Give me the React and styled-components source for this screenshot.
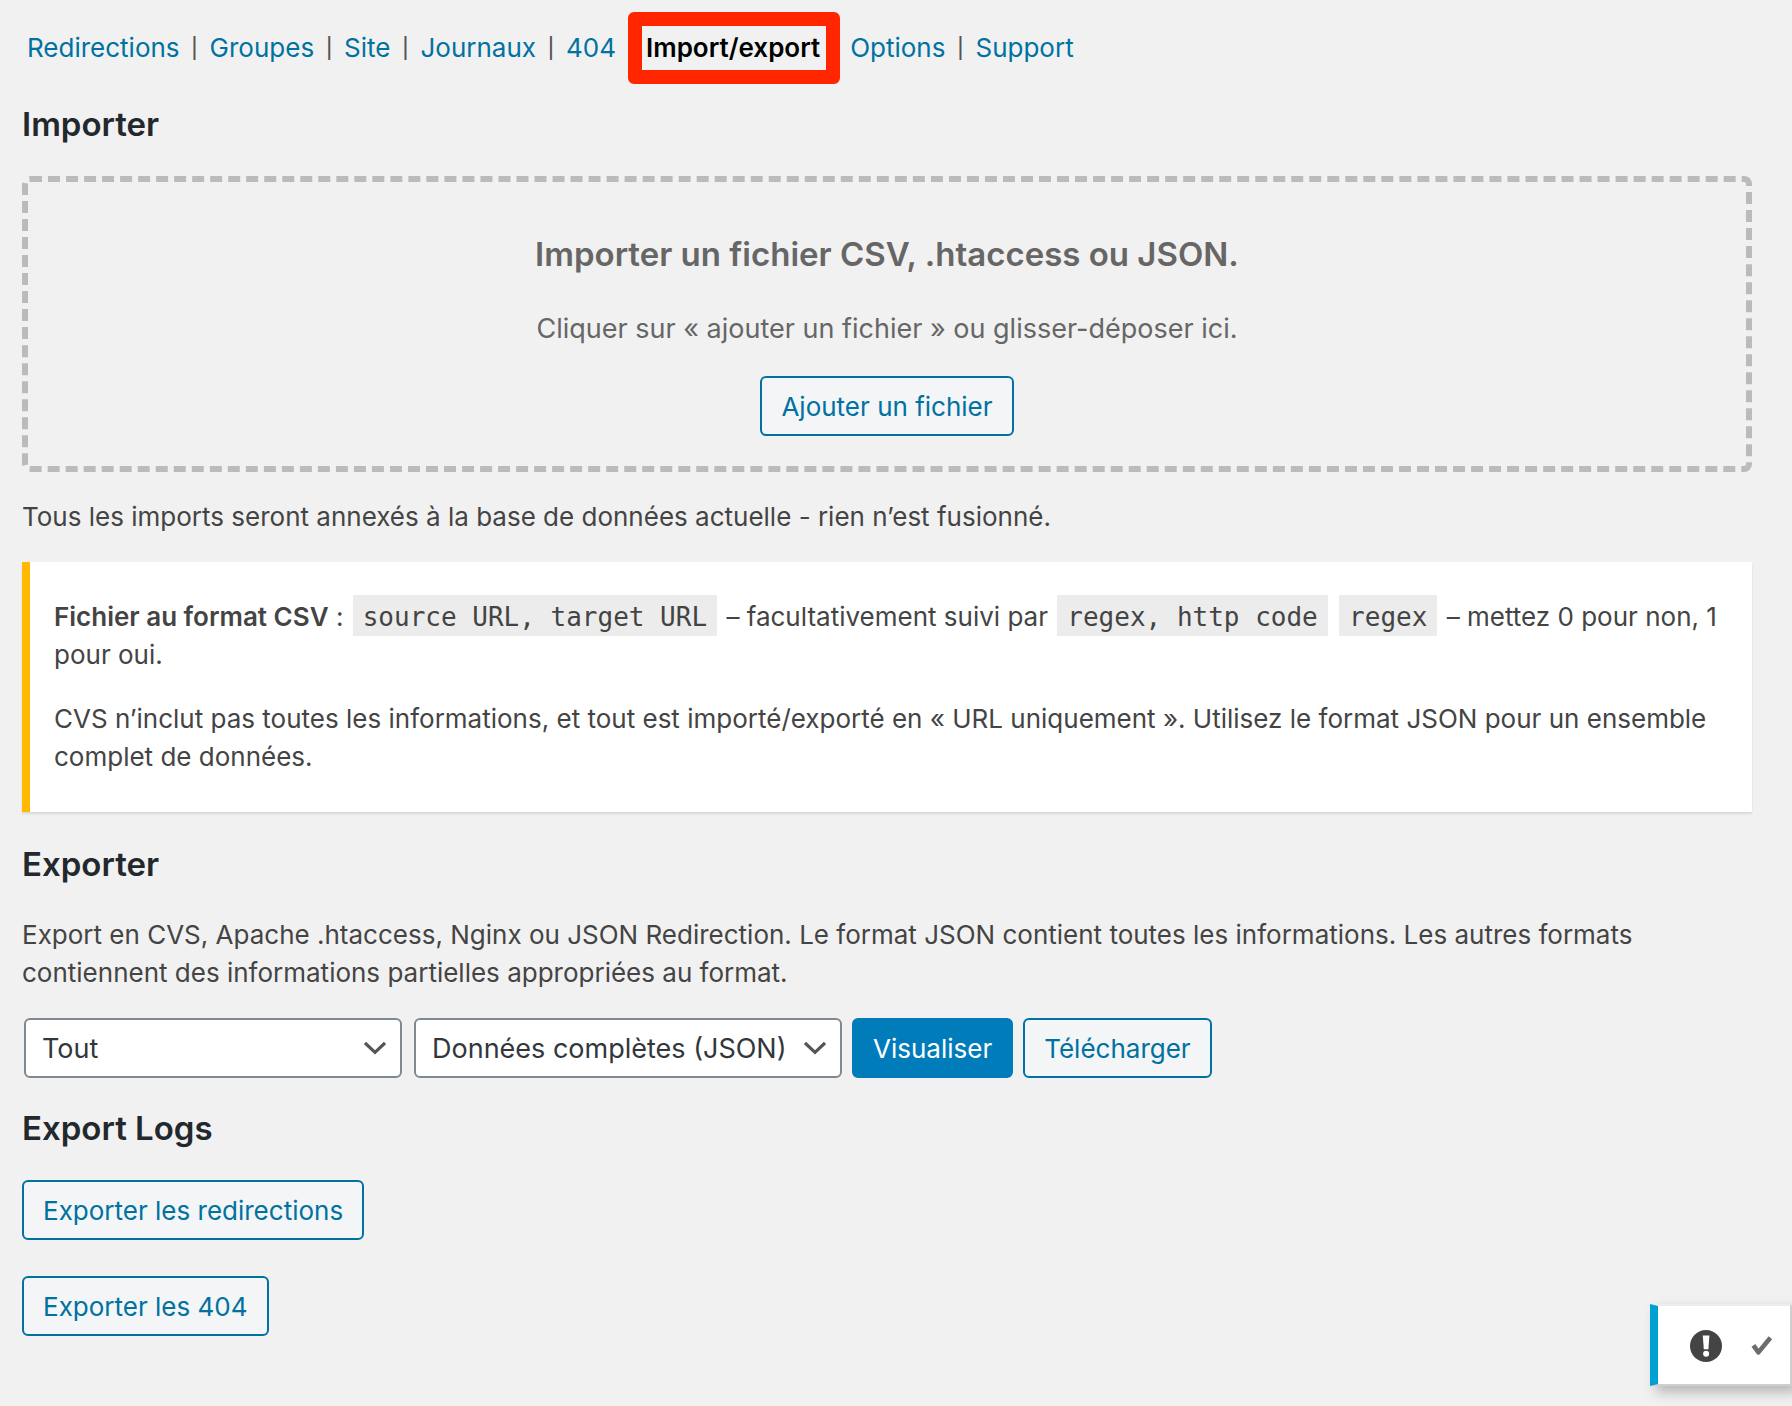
import React from "react";
import styled, { createGlobalStyle } from "styled-components";

const GlobalStyle = createGlobalStyle`
  *, *::before, *::after {
    box-sizing: border-box;
  }
  body {
    margin: 0;
    background: #f1f1f1;
    color: #444;
    font-family: Inter, "Liberation Sans", sans-serif;
    font-size: 26px;
    line-height: 38px;
  }
`;

const Page = styled.main`
  padding: 28px 40px 70px 22px;
`;

const Nav = styled.ul`
  display: flex;
  flex-wrap: wrap;
  margin: 0;
  padding: 0 0 0 5px;
  list-style: none;
  line-height: 40px;
`;

const NavItem = styled.li`
  display: flex;
  white-space: nowrap;

  & + &::before {
    content: "|";
    width: 30px;
    color: #555;
    font-size: 20px;
    font-weight: 500;
    text-align: center;
  }
`;

const NavLink = styled.a`
  position: relative;
  color: ${(p) => (p.$current ? "#000" : "#0071a1")};
  font-weight: ${(p) => (p.$current ? 600 : 400)};
  text-decoration: none;
`;

const Highlight = styled.span`
  position: absolute;
  inset: -16px -20px -16px -18px;
  border: 14px solid #ff2600;
  border-radius: 6px;
  pointer-events: none;
`;

const Heading = styled.h2`
  margin: ${(p) => p.$top}px 0 0;
  color: #23282d;
  font-size: 33px;
  font-weight: 600;
  line-height: 48px;
`;

const DropZone = styled.section`
  display: flex;
  flex-direction: column;
  align-items: center;
  margin-top: 28px;
  padding: 48px 20px 30px;
  border: 6px dashed #bbb;
  border-radius: 8px;
  color: #666;
  text-align: center;
`;

const DropTitle = styled.h3`
  margin: 0;
  font-size: 33px;
  font-weight: 600;
  line-height: 48px;
`;

const DropText = styled.p`
  margin: 30px 0 26px;
  font-size: 27px;
  line-height: 42px;
`;

const Button = styled.button`
  height: 60px;
  padding: 2px 19px 0;
  border: 2px solid ${(p) => (p.$primary ? "#007cba" : "#0071a1")};
  border-radius: 6px;
  background: ${(p) => (p.$primary ? "#007cba" : "#f3f5f6")};
  color: ${(p) => (p.$primary ? "#fff" : "#0071a1")};
  font: inherit;
  white-space: nowrap;
  cursor: pointer;
`;

const Text = styled.p`
  margin: ${(p) => p.$top}px 0 0;
`;

const Strong = styled.strong`
  font-weight: 600;
`;

const Notice = styled.aside`
  margin-top: 26px;
  padding: 36px 24px 36px;
  border-left: 8px solid #ffb900;
  background: #fff;
  box-shadow: 0 2px 2px rgba(0, 0, 0, 0.1);
`;

const Code = styled.code`
  margin: 0 2px;
  padding: 7px 10px 4px;
  background: #ececec;
  font-family: "DejaVu Sans Mono", monospace;
  font-size: 26px;
  line-height: 38px;
`;

const Controls = styled.form`
  display: flex;
  flex-wrap: wrap;
  gap: 10px;
  margin: 26px 0 0 2px;
`;

const SelectBox = styled.label`
  position: relative;
  width: ${(p) => p.$width}px;
  margin-right: ${(p) => p.$gap || 0}px;
`;

const Select = styled.select`
  width: 100%;
  height: 60px;
  padding: 2px 48px 0 16px;
  border: 2px solid #7e8993;
  border-radius: 6px;
  background: #fff;
  color: #32373c;
  font: inherit;
  font-size: 27px;
  appearance: none;
`;

const Chevron = styled.svg`
  position: absolute;
  top: 20px;
  right: 16px;
  width: 22px;
  height: 20px;
  pointer-events: none;
`;

const LogActions = styled.div`
  display: flex;
  flex-direction: column;
  align-items: flex-start;
  gap: 36px;
  margin-top: 28px;
`;

const Toast = styled.div`
  position: fixed;
  right: 0;
  bottom: 20px;
  display: flex;
  align-items: center;
  gap: 25px;
  height: 82px;
  padding: 2px 13px 0 32px;
  border: 2px solid #ccd0d4;
  border-top-color: #ededed;
  border-left: 8px solid #00a0d2;
  background: #fff;
  box-shadow: 6px 6px 12px rgba(0, 0, 0, 0.25);
`;

const WarningIcon = styled.svg`
  width: 32px;
  height: 32px;
`;

const Dismiss = styled.button`
  display: flex;
  padding: 0 4px;
  border: 0;
  background: none;
  cursor: pointer;
`;

const tabs = [
  "Redirections",
  "Groupes",
  "Site",
  "Journaux",
  "404",
  "Import/export",
  "Options",
  "Support",
];

function SelectField({ label, width, gap, options }) {
  return (
    <SelectBox $width={width} $gap={gap}>
      <Select aria-label={label}>
        {options.map((o) => (
          <option key={o}>{o}</option>
        ))}
      </Select>
      <Chevron viewBox="0 0 22 20" aria-hidden="true">
        <path d="M1 5 11 14.4 21 5" fill="none" stroke="#555" strokeWidth="3.2" />
      </Chevron>
    </SelectBox>
  );
}

export default function App() {
  return (
    <>
      <GlobalStyle />
      <Page>
        <nav>
          <Nav>
            {tabs.map((tab) => {
              const current = tab === "Import/export";
              return (
                <NavItem key={tab}>
                  <NavLink href="#" $current={current} aria-current={current ? "page" : undefined}>
                    {tab}
                    {current && <Highlight />}
                  </NavLink>
                </NavItem>
              );
            })}
          </Nav>
        </nav>

        <Heading $top={32}>Importer</Heading>
        <DropZone>
          <DropTitle>Importer un fichier CSV, .htaccess ou JSON.</DropTitle>
          <DropText>Cliquer sur « ajouter un fichier » ou glisser-déposer ici.</DropText>
          <Button type="button">Ajouter un fichier</Button>
        </DropZone>
        <Text $top={26}>
          Tous les imports seront annexés à la base de données actuelle - rien n’est fusionné.
        </Text>

        <Notice>
          <Text $top={0}>
            <Strong>Fichier au format CSV</Strong> : <Code>source URL, target URL</Code> –
            facultativement suivi par <Code>regex, http code</Code> <Code>regex</Code> – mettez 0
            pour non, 1 pour oui.
          </Text>
          <Text $top={26}>
            CVS n’inclut pas toutes les informations, et tout est importé/exporté en « URL
            uniquement ». Utilisez le format JSON pour un ensemble complet de données.
          </Text>
        </Notice>

        <Heading $top={28}>Exporter</Heading>
        <Text $top={28}>
          Export en CVS, Apache .htaccess, Nginx ou JSON Redirection. Le format JSON contient toutes
          les informations. Les autres formats contiennent des informations partielles appropriées
          au format.
        </Text>
        <Controls onSubmit={(e) => e.preventDefault()}>
          <SelectField label="Module" width={378} gap={2} options={["Tout"]} />
          <SelectField label="Format" width={428} options={["Données complètes (JSON)"]} />
          <Button type="button" $primary>
            Visualiser
          </Button>
          <Button type="button">Télécharger</Button>
        </Controls>

        <Heading $top={26}>Export Logs</Heading>
        <LogActions>
          <Button type="button">Exporter les redirections</Button>
          <Button type="button">Exporter les 404</Button>
        </LogActions>
      </Page>

      <Toast role="status">
        <WarningIcon viewBox="0 0 32 32" aria-hidden="true">
          <circle cx="16" cy="16" r="16" fill="#444" />
          <path d="M12.8 5.5h6.6l-1 13.8h-4.6z" fill="#fff" />
          <circle cx="16.1" cy="23.8" r="3" fill="#fff" />
        </WarningIcon>
        <Dismiss type="button" aria-label="Fermer">
          <svg width="22" height="20" viewBox="0 0 22 20" aria-hidden="true">
            <path
              d="M2.4 9.4 7.4 16.4 19.4 1.8"
              fill="none"
              stroke="#6c6c6c"
              strokeWidth="4.6"
              strokeLinejoin="round"
            />
          </svg>
        </Dismiss>
      </Toast>
    </>
  );
}
